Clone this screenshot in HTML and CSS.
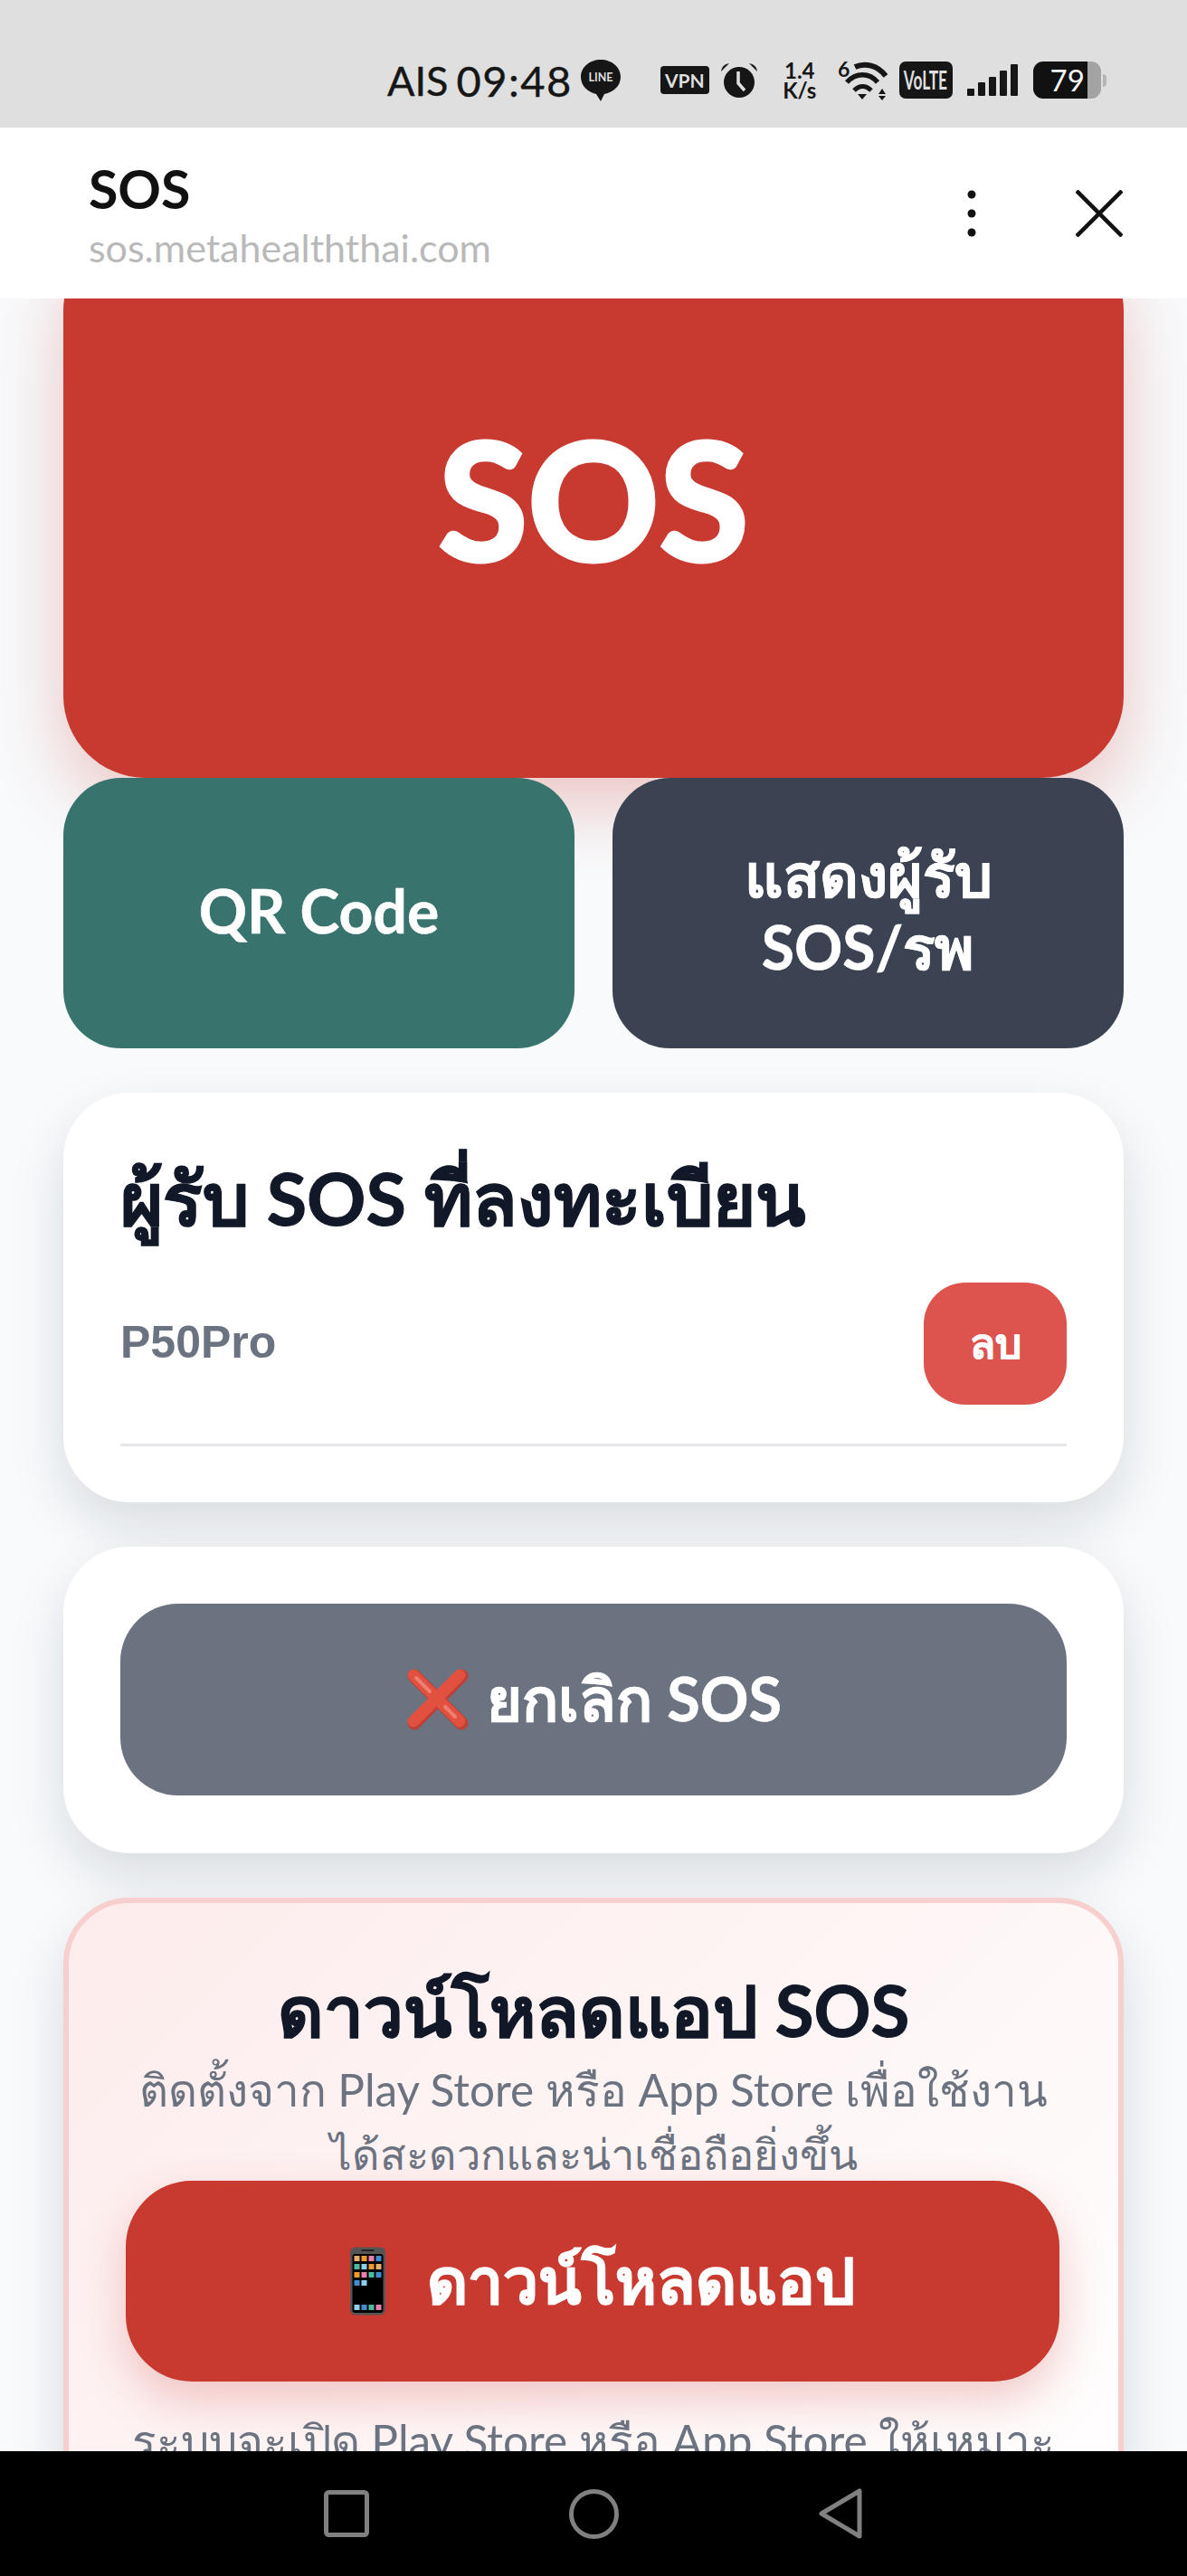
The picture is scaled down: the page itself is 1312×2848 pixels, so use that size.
FILE: index.html
```html
<!DOCTYPE html>
<html lang="th">
<head>
    <meta charset="UTF-8">
    <meta name="viewport" content="width=device-width, initial-scale=1.0">
    <title>SOS</title>
    <link rel="stylesheet" href="styles.css">
</head>
<body>
    <div class="screen">
        <!-- Status bar -->
        <div class="statusbar">
            <span class="carrier">AIS</span>
            <span class="clock">09:48</span>
            <svg class="ic-line" viewBox="0 0 44 46">
                <path d="M22 0C10 0 0 8 0 19c0 10 8 17 17 19l5 8 4-8c10-2 18-9 18-19C44 8 34 0 22 0z" fill="#161616"/>
                <text x="22" y="24" class="line-text">LINE</text>
            </svg>
            <span class="vpn">VPN</span>
            <svg class="ic-alarm" viewBox="0 0 44 40">
                <circle cx="22" cy="22" r="17" fill="#161616"/>
                <path d="M2 10C3 4 6 2 11 1zM42 10C41 4 38 2 33 1z" fill="#161616"/>
                <path d="M21 10v13l7 8" fill="none" stroke="#dfdfdf" stroke-width="3.5"/>
            </svg>
            <span class="speed"><span>1.4</span><span>K/s</span></span>
            <svg class="ic-wifi" viewBox="0 0 56 44">
                <text x="0" y="18" class="wifi-six">6</text>
                <path d="M19 7C30 2 44 5 53 17" fill="none" stroke="#161616" stroke-width="6"/>
                <path d="M10 24C20 13 35 13 44 24" fill="none" stroke="#161616" stroke-width="5.5"/>
                <path d="M18 33C24 27 31 27 37 33" fill="none" stroke="#161616" stroke-width="5"/>
                <path d="M22 37h10l-5 6zM49 31l4 6h-8zM49 44l4-5h-8z" fill="#161616"/>
            </svg>
            <span class="volte"><span>VoLTE</span></span>
            <span class="signal"><i class="b1"></i><i class="b2"></i><i class="b3"></i><i class="b4"></i><i class="b5"></i></span>
            <span class="battery"><span class="battery-level">79</span><span class="battery-rest"></span></span>
            <span class="battery-tip"></span>
        </div>

        <!-- Browser toolbar -->
        <div class="toolbar">
            <div class="toolbar-title">
                <div class="page-name">SOS</div>
                <div class="page-url">sos.metahealththai.com</div>
            </div>
            <svg class="ic-more" viewBox="0 0 10 52">
                <circle cx="5" cy="5" r="4.5"/><circle cx="5" cy="26" r="4.5"/><circle cx="5" cy="47" r="4.5"/>
            </svg>
            <svg class="ic-close" viewBox="0 0 52 52">
                <path d="M1 1l50 50M51 1L1 51" fill="none" stroke="#111" stroke-width="4.5"/>
            </svg>
        </div>

        <!-- Page content -->
        <div class="content">
            <button class="sos-btn">SOS</button>
            <div class="action-row">
                <button class="action-btn teal">QR Code</button>
                <button class="action-btn slate">แสดงผู้รับ<br>SOS/รพ</button>
            </div>

            <section class="card receivers-card">
                <h2>ผู้รับ SOS ที่ลงทะเบียน</h2>
                <div class="receiver">
                    <span class="receiver-name">P50Pro</span>
                    <button class="delete-btn">ลบ</button>
                </div>
            </section>

            <section class="card cancel-card">
                <button class="cancel-btn">
                    <svg class="ic-cross" viewBox="0 0 72 72">
                        <path d="M10 10l52 52M62 10L10 62" fill="none" stroke="#bf4136" stroke-width="15" stroke-linecap="round"/>
                        <path d="M9 9l51 51M60 9L9 60" fill="none" stroke="#e25140" stroke-width="13" stroke-linecap="round"/>
                        <path d="M12 12l15 15M44 44l11 11" fill="none" stroke="#ee7f70" stroke-width="4" stroke-linecap="round"/>
                    </svg>
                    <span>ยกเลิก SOS</span>
                </button>
            </section>

            <section class="card download-card">
                <h2>ดาวน์โหลดแอป SOS</h2>
                <p>ติดตั้งจาก Play Store หรือ App Store เพื่อใช้งาน<br><span class="thai-line">ได้สะดวกและน่าเชื่อถือยิ่งขึ้น</span></p>
                <button class="download-btn">
                    <svg class="ic-phone" viewBox="0 0 40 76">
                        <rect x="0.5" y="0.5" width="39" height="75" rx="6" fill="#555"/>
                        <rect x="3" y="8" width="34" height="65" rx="3" fill="#000"/>
                        <rect x="13" y="3" width="14" height="2" fill="#222"/>
                        <g class="apps">
                            <rect x="5" y="10" width="6" height="6" fill="#e8b06c"/><rect x="13" y="10" width="6" height="6" fill="#f09a30"/><rect x="21" y="10" width="6" height="6" fill="#ea7fae"/><rect x="29" y="10" width="6" height="6" fill="#3f8ed0"/>
                            <rect x="5" y="19" width="6" height="6" fill="#4dbb9c"/><rect x="13" y="19" width="6" height="6" fill="#8ed0ee"/><rect x="21" y="19" width="6" height="6" fill="#f09a30"/><rect x="29" y="19" width="6" height="6" fill="#e8b06c"/>
                            <rect x="5" y="28" width="6" height="6" fill="#f09a30"/><rect x="13" y="28" width="6" height="6" fill="#ea7fae"/><rect x="21" y="28" width="6" height="6" fill="#4dbb9c"/><rect x="29" y="28" width="6" height="6" fill="#3f8ed0"/>
                            <rect x="5" y="37" width="6" height="6" fill="#3f8ed0"/><rect x="13" y="37" width="6" height="6" fill="#8ed0ee"/>
                            <rect x="5" y="64" width="6" height="6" fill="#8ed0ee"/><rect x="13" y="64" width="6" height="6" fill="#3f8ed0"/><rect x="21" y="64" width="6" height="6" fill="#4dbb9c"/><rect x="29" y="64" width="6" height="6" fill="#ea7fae"/>
                        </g>
                    </svg>
                    <span>ดาวน์โหลดแอป</span>
                </button>
                <p class="note">ระบบจะเปิด Play Store หรือ App Store ให้เหมาะ<br>กับอุปกรณ์ของคุณ</p>
            </section>
        </div>

        <!-- Android nav -->
        <div class="navbar">
            <svg class="ic-square" viewBox="0 0 50 52"><rect x="2.5" y="2.5" width="45" height="47" rx="3" fill="none" stroke="#808080" stroke-width="5"/></svg>
            <svg class="ic-circle" viewBox="0 0 56 56"><circle cx="28" cy="28" r="25.5" fill="none" stroke="#808080" stroke-width="5"/></svg>
            <svg class="ic-back" viewBox="0 0 48 56"><path d="M45 3v50L3 28z" fill="none" stroke="#808080" stroke-width="5" stroke-linejoin="round"/></svg>
        </div>
    </div>
</body>
</html>
```

FILE: styles.css
```css
* {
    margin: 0;
    padding: 0;
    box-sizing: border-box;
}

body {
    font-family: Lato, "Noto Sans", sans-serif;
    background: #f8fafc;
    color: #111827;
}

button {
    font-family: inherit;
    border: none;
    color: white;
    font-weight: 700;
    -webkit-text-stroke: 0.6px white;
}

.screen {
    width: 1312px;
    height: 2848px;
    display: flex;
    flex-direction: column;
    overflow: hidden;
}

/* Status bar */
.statusbar {
    height: 141px;
    flex: none;
    background: #dfdfdf;
    display: flex;
    align-items: center;
    padding: 36px 0 0 428px;
    color: #161616;
}

.carrier {
    font-size: 45px;
    line-height: 50px;
    margin-right: 9px;
    -webkit-text-stroke: 0.4px #161616;
}

.clock {
    font-size: 47px;
    line-height: 50px;
    letter-spacing: 1.5px;
    margin-right: 9px;
    -webkit-text-stroke: 0.4px #161616;
}

.ic-line {
    width: 44px;
    height: 46px;
    margin-right: 44px;
    flex: none;
}

.line-text {
    font-size: 12.5px;
    font-weight: 700;
    fill: #dfdfdf;
    text-anchor: middle;
}

.vpn {
    width: 54px;
    height: 31px;
    background: #161616;
    color: #dfdfdf;
    border-radius: 4px;
    font-size: 21px;
    font-weight: 700;
    line-height: 31px;
    text-align: center;
    margin-right: 11px;
}

.ic-alarm {
    width: 44px;
    height: 40px;
    margin-right: 22px;
    flex: none;
}

.speed {
    width: 46px;
    margin-right: 19px;
    display: flex;
    flex-direction: column;
    align-items: center;
    font-size: 24px;
    font-weight: 700;
    line-height: 22px;
}

.ic-wifi {
    width: 56px;
    height: 44px;
    margin-right: 12px;
    flex: none;
}

.wifi-six {
    font-size: 23px;
    font-weight: 700;
    fill: #161616;
}

.volte {
    width: 59px;
    height: 41px;
    background: #161616;
    color: #dfdfdf;
    border-radius: 7px;
    font-size: 28px;
    font-weight: 700;
    line-height: 41px;
    display: flex;
    justify-content: center;
    margin-right: 16px;
}

.volte span {
    transform: scaleX(0.62);
}

.signal {
    width: 56px;
    height: 35px;
    display: flex;
    align-items: flex-end;
    justify-content: space-between;
    margin-right: 17px;
}

.signal i {
    width: 8px;
    background: #161616;
    border-radius: 1px;
}

.b1 { height: 8px; }
.b2 { height: 15px; }
.b3 { height: 21px; }
.b4 { height: 28px; }
.b5 { height: 35px; }

.battery {
    width: 75px;
    height: 41px;
    border-radius: 11px;
    overflow: hidden;
    display: flex;
}

.battery-level {
    width: 60px;
    background: #111;
    color: #f4f4f4;
    font-size: 33px;
    line-height: 41px;
    text-align: right;
    padding-right: 3px;
}

.battery-rest {
    flex: 1;
    background: #a3a3a3;
}

.battery-tip {
    width: 4px;
    height: 14px;
    margin-left: 2px;
    background: #b5b5b5;
    border-radius: 0 4px 4px 0;
}

/* Toolbar */
.toolbar {
    height: 189px;
    flex: none;
    background: white;
    display: flex;
    align-items: center;
    padding-left: 98px;
    position: relative;
    z-index: 2;
}

.toolbar-title {
    width: 971px;
    padding-top: 4px;
}

.page-name {
    font-size: 59px;
    font-weight: 700;
    line-height: 66px;
    color: #111;
}

.page-url {
    font-size: 43px;
    line-height: 52px;
    margin-top: 6px;
    color: #b9b9b9;
}

.ic-more {
    width: 10px;
    height: 52px;
    fill: #111;
    margin: 0 110px 0 0;
}

.ic-close {
    width: 52px;
    height: 52px;
}

/* Content */
.content {
    flex: 1;
    min-height: 0;
    overflow: hidden;
    padding: 0 70px;
}

.sos-btn {
    display: block;
    width: 100%;
    height: 607px;
    margin-top: -77px;
    padding-bottom: 14px;
    background: #c8392f;
    border-radius: 91px;
    font-size: 180px;
    -webkit-text-stroke: 5px white;
    box-shadow: 0 30px 80px rgba(200, 57, 47, 0.28);
}

.action-row {
    display: flex;
    gap: 42px;
    position: relative;
}

.action-btn {
    flex: 1;
    height: 299px;
    padding-bottom: 6px;
    border-radius: 64px;
    font-size: 66px;
    line-height: 80px;
}

.teal { background: #38736d; }
.slate { background: #3b4252; }

.card {
    background: white;
    border-radius: 73px;
    padding: 63px;
    margin-top: 49px;
    box-shadow: 0 26px 60px rgba(17, 24, 39, 0.13);
}

.card h2 {
    font-size: 81px;
    font-weight: 700;
    line-height: 106px;
    color: #111827;
    -webkit-text-stroke: 1px #111827;
}

.receivers-card {
    height: 453px;
}

.receiver {
    display: flex;
    justify-content: space-between;
    align-items: flex-start;
    margin-top: 41px;
    padding-bottom: 43px;
    border-bottom: 3px solid #e5e7eb;
}

.receiver-name {
    font-family: "Liberation Sans", sans-serif;
    font-size: 50px;
    font-weight: 700;
    line-height: 60px;
    color: #6b7280;
    margin-top: 36px;
}

.delete-btn {
    width: 158px;
    height: 135px;
    background: #dd544f;
    border-radius: 46px;
    font-size: 46px;
}

.cancel-card {
    height: 339px;
}

.cancel-btn {
    width: 100%;
    height: 212px;
    background: #6b7280;
    border-radius: 64px;
    font-size: 66.5px;
    display: flex;
    align-items: center;
    justify-content: center;
    gap: 18px;
}

.ic-cross {
    width: 72px;
    height: 72px;
}

.download-card {
    height: 800px;
    padding: 65px 63px;
    border: 6px solid #f8cfcf;
    background: linear-gradient(135deg, #fdecec, #ffffff);
    text-align: center;
}

.download-card h2 {
    font-size: 78px;
}

.download-card p {
    font-size: 49.5px;
    line-height: 70px;
    color: #6b7280;
    white-space: nowrap;
}

.thai-line {
    font-size: 47px;
}

.download-btn {
    width: 1032px;
    height: 222px;
    margin: -5px 0 0 0;
    background: #c8392f;
    border-radius: 73px;
    font-size: 69.5px;
    -webkit-text-stroke: 1.2px white;
    display: flex;
    align-items: center;
    justify-content: center;
    gap: 44px;
    padding-left: 20px;
    box-shadow: 0 20px 50px rgba(200, 57, 47, 0.25);
}

.ic-phone {
    width: 43px;
    height: 76px;
}

.download-card .note {
    margin-top: 30px;
}

/* Android nav */
.navbar {
    height: 138px;
    flex: none;
    background: black;
    position: relative;
    z-index: 2;
    display: flex;
    align-items: center;
    padding-left: 358px;
}

.ic-square {
    width: 50px;
    height: 52px;
    margin-right: 221px;
}

.ic-circle {
    width: 55px;
    height: 55px;
    margin-right: 221px;
}

.ic-back {
    width: 48px;
    height: 56px;
}
```
